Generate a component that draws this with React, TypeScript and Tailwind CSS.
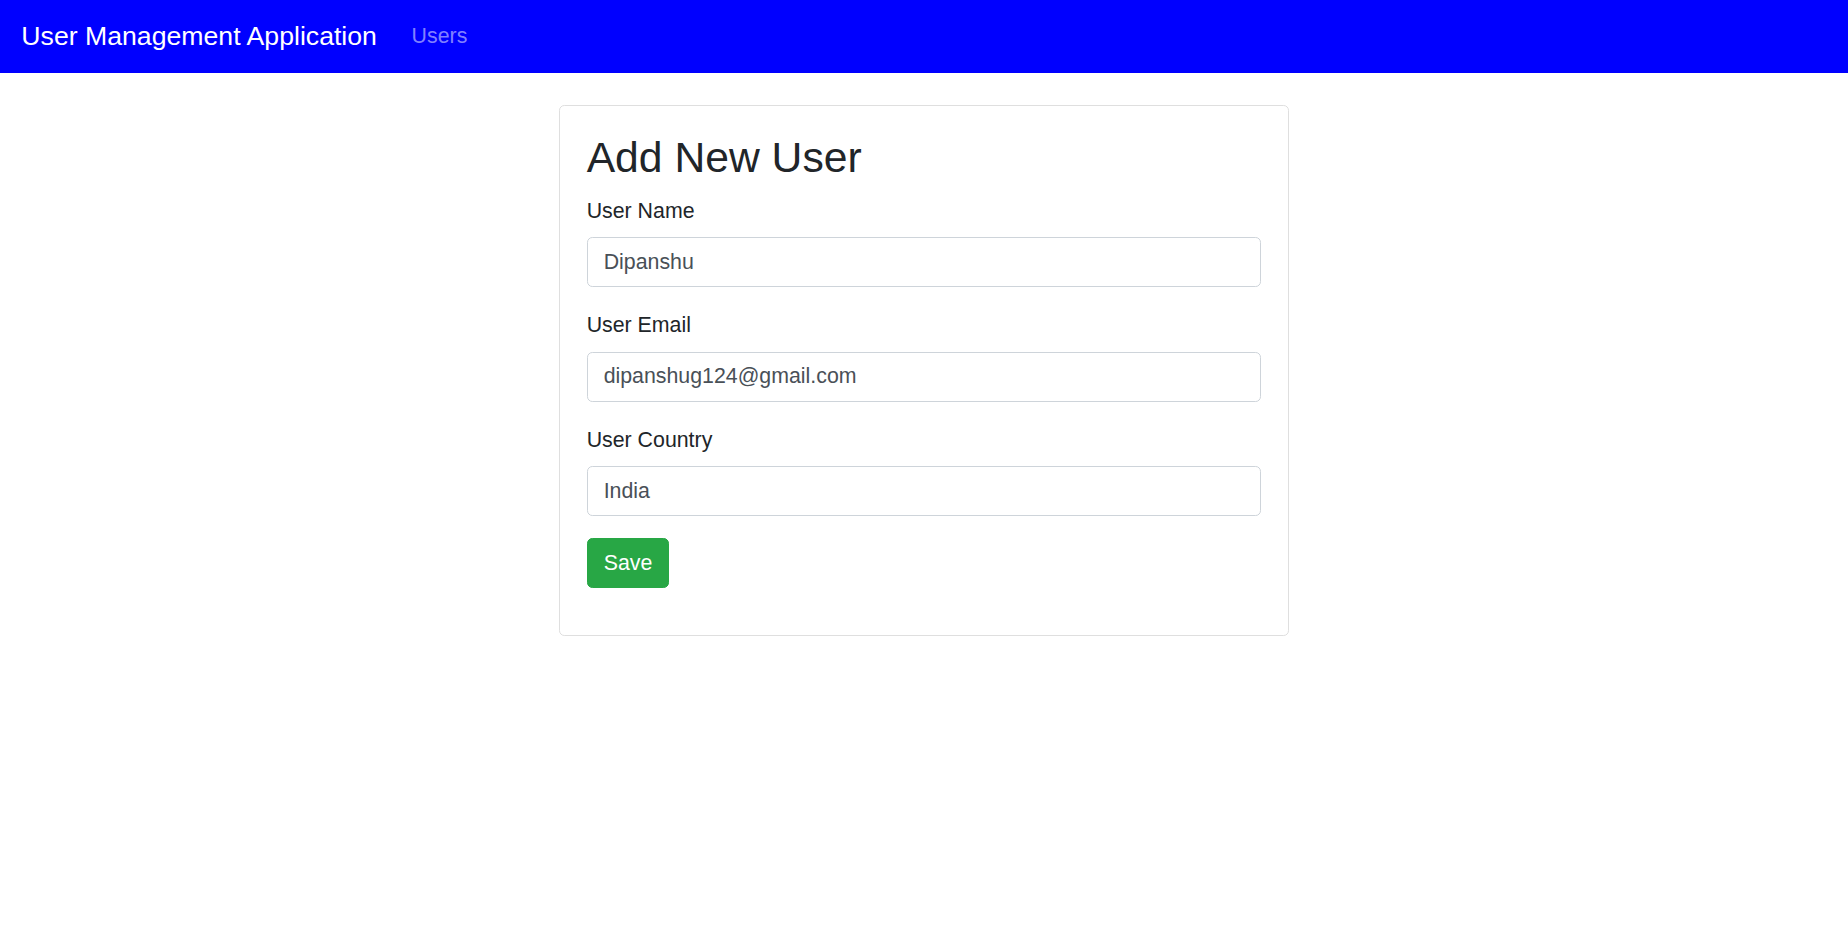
export default function App() {
  const fields = [
    { label: "User Name", value: "Dipanshu" },
    { label: "User Email", value: "dipanshug124@gmail.com" },
    { label: "User Country", value: "India" },
  ];

  return (
    <div className="min-h-screen bg-white text-[#212529] font-['Liberation_Sans',Arial,sans-serif]">
      {/* Navbar */}
      <nav className="flex h-[73px] items-center bg-[#0000ff] px-[21.33px] pb-[2px]">
        <span className="mr-[24px] text-[26.67px] leading-[40px] text-white">User Management Application</span>
        <a className="px-[10.67px] text-[21.33px] leading-[32px] text-[#8080ff]">Users</a>
      </nav>

      {/* Card */}
      <div className="mx-auto mt-[32px] w-[730px] rounded-[5.33px] border border-[#dfdfdf] bg-white">
        <div className="p-[26.67px]">
          <h2 className="mb-[10.67px] -mt-[1px] pb-[1px] text-[42.67px] font-normal leading-[1.2]">Add New User</h2>
          <form>
            {fields.map((f) => (
              <div key={f.label} className="mb-[22px]">
                <label className="mb-[10.67px] block text-[21.33px] leading-[32px]">{f.label}</label>
                <input
                  readOnly
                  value={f.value}
                  className="block h-[50px] w-full rounded-[5.33px] border border-[#ced4da] bg-white px-[16px] text-[21.33px] text-[#495057] outline-none"
                />
              </div>
            ))}
            <div className="mb-[20px]">
              <button
                type="button"
                className="h-[50px] rounded-[5.33px] border border-[#28a745] bg-[#28a745] px-[16px] text-[21.33px] leading-[32px] text-white"
              >
                Save
              </button>
            </div>
          </form>
        </div>
      </div>
    </div>
  );
}
